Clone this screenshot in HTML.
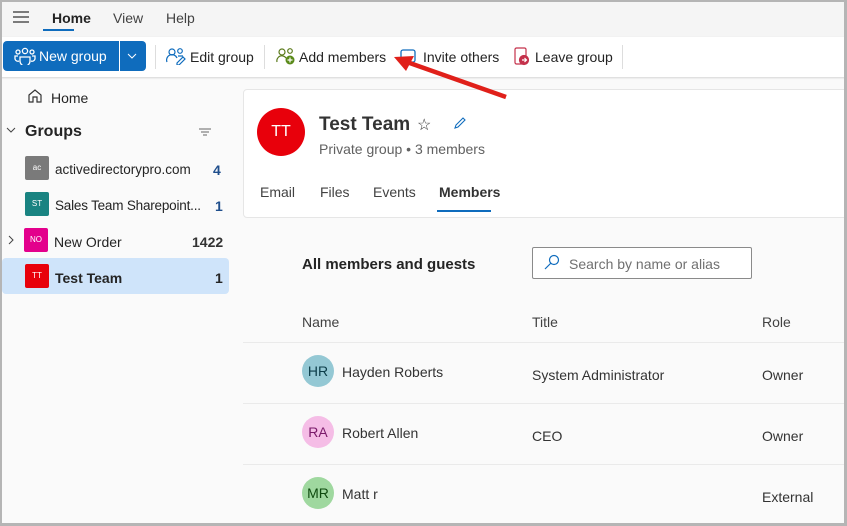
<!DOCTYPE html>
<html><head><meta charset="utf-8"><style>
*{box-sizing:border-box;margin:0;padding:0}
body{width:847px;height:526px;overflow:hidden;font-family:"Liberation Sans",sans-serif;background:#fafafa;color:#242424;position:relative;font-size:14px}
.frame{position:absolute;inset:0;border:2px solid #b5b5b5;border-right:3px solid #b5b5b5;border-bottom:3px solid #b5b5b5;pointer-events:none;z-index:10}
.a{position:absolute;white-space:nowrap}
.top{position:absolute;left:0;top:0;width:847px;height:37px;background:#f5f5f5}
.tb{position:absolute;left:0;top:37px;width:847px;height:40px;background:#fff;box-shadow:0 1px 2px rgba(0,0,0,.15)}
.sq{position:absolute;width:24px;height:24px;border-radius:2px;color:#fff;font-size:8px;text-align:center;line-height:24px}
.av{position:absolute;width:32px;height:32px;border-radius:50%;font-size:14px;text-align:center;line-height:32px}
.sep{position:absolute;top:45px;width:1px;height:24px;background:#ddd}
.hr{position:absolute;left:243px;width:604px;height:1px;background:#eaeaea}
</style></head><body>
<div class="top"></div>
<svg class="a" style="left:12px;top:10px" width="18" height="14"><path d="M1 2h16M1 7h16M1 12h16" stroke="#333" stroke-width="1.3"/></svg>
<div class="a" style="left:52px;top:10px;font-weight:bold;font-size:14px">Home</div>
<div class="a" style="left:43px;top:29px;width:31px;height:2px;background:#0f6cbd"></div>
<div class="a" style="left:113px;top:10px;color:#424242">View</div>
<div class="a" style="left:166px;top:10px;color:#424242">Help</div>
<div class="tb"></div>
<div class="a" style="left:3px;top:41px;width:116px;height:30px;background:#0f6cbd;border-radius:4px 0 0 4px"></div>
<div class="a" style="left:120px;top:41px;width:26px;height:30px;background:#0f6cbd;border-radius:0 4px 4px 0"></div>
<svg class="a" style="left:14px;top:47px" width="22" height="18" fill="none" stroke="#fff" stroke-width="1.3"><circle cx="11" cy="4" r="2.6"/><circle cx="4" cy="5" r="2"/><circle cx="18" cy="5" r="2"/><path d="M6 10h10v4a5 5 0 0 1-10 0z"/><path d="M4 9H1v3a3 3 0 0 0 4 2M18 9h3v3a3 3 0 0 1-4 2"/></svg>
<div class="a" style="left:39px;top:48px;color:#fff;font-size:14px">New group</div>
<svg class="a" style="left:127px;top:53px" width="10" height="7"><path d="M1 1l4 4 4-4" stroke="#fff" fill="none"/></svg>
<div class="sep" style="left:155px"></div>
<svg class="a" style="left:166px;top:47px" width="20" height="18" fill="none" stroke="#0f6cbd" stroke-width="1.2"><circle cx="6" cy="5" r="3"/><circle cx="14" cy="4" r="2.3"/><path d="M1 15a5 5 0 0 1 10-4M12 9h5"/><path d="M11 16l6-6 2 2-6 6h-2z"/></svg>
<div class="a" style="left:190px;top:49px">Edit group</div>
<div class="sep" style="left:264px"></div>
<svg class="a" style="left:276px;top:47px" width="20" height="18" fill="none" stroke="#5a7a1a" stroke-width="1.2"><circle cx="6" cy="5" r="3"/><circle cx="14" cy="4" r="2.3"/><path d="M1 15a5 5 0 0 1 9-4"/><circle cx="14" cy="13" r="4.5" fill="#5a8a1a" stroke="none"/><path d="M14 10.5v5M11.5 13h5" stroke="#fff"/></svg>
<div class="a" style="left:299px;top:49px">Add members</div>
<svg class="a" style="left:400px;top:48px" width="16" height="16" fill="none" stroke="#0f6cbd" stroke-width="1.3"><rect x="1" y="2" width="14" height="12" rx="2"/></svg>
<div class="a" style="left:423px;top:49px">Invite others</div>
<svg class="a" style="left:513px;top:47px" width="18" height="19" fill="none" stroke="#c4314b" stroke-width="1.2"><rect x="2" y="1" width="11" height="16" rx="1.5"/><circle cx="11" cy="13" r="4.5" fill="#c4314b"/><path d="M9 13h4M11.5 11l2 2-2 2" stroke="#fff"/></svg>
<div class="a" style="left:535px;top:49px">Leave group</div>
<div class="sep" style="left:622px"></div>
<svg class="a" style="left:390px;top:50px;z-index:5" width="120" height="50"><path d="M116 47L14 11" stroke="#e0201a" stroke-width="4.5"/><path d="M4 7l20-1-8 15z" fill="#e0201a"/></svg>

<svg class="a" style="left:27px;top:88px" width="16" height="16" fill="none" stroke="#333" stroke-width="1.2"><path d="M2 7l6-5 6 5v7h-4v-5H6v5H2z"/></svg>
<div class="a" style="left:51px;top:90px">Home</div>
<svg class="a" style="left:6px;top:127px" width="10" height="8"><path d="M1 1l4 4 4-4" stroke="#444" fill="none"/></svg>
<div class="a" style="left:25px;top:123px;font-weight:bold;font-size:16px">Groups</div>
<svg class="a" style="left:198px;top:128px" width="14" height="9"><path d="M1 1h12M3 4h8M5 7h4" stroke="#666"/></svg>
<div class="sq" style="left:25px;top:156px;background:#7a7a7a">ac</div>
<div class="a" style="left:55px;top:162px;font-size:13.5px">activedirectorypro.com</div>
<div class="a" style="left:213px;top:162px;color:#1f4e8c;font-weight:bold">4</div>
<div class="sq" style="left:25px;top:192px;background:#198381">ST</div>
<div class="a" style="left:55px;top:198px;font-size:13.5px;letter-spacing:-0.2px">Sales Team Sharepoint...</div>
<div class="a" style="left:215px;top:198px;font-weight:bold;color:#1f4e8c">1</div>
<svg class="a" style="left:8px;top:235px" width="7" height="10"><path d="M1 1l4 4-4 4" stroke="#444" fill="none"/></svg>
<div class="sq" style="left:24px;top:228px;background:#e3008c">NO</div>
<div class="a" style="left:54px;top:234px">New Order</div>
<div class="a" style="left:192px;top:234px;font-weight:bold;color:#333">1422</div>
<div class="a" style="left:2px;top:258px;width:227px;height:36px;background:#cfe4fa;border-radius:4px"></div>
<div class="sq" style="left:25px;top:264px;background:#e8000b">TT</div>
<div class="a" style="left:55px;top:270px;font-weight:bold">Test Team</div>
<div class="a" style="left:215px;top:270px;font-weight:bold">1</div>

<div class="a" style="left:243px;top:89px;width:610px;height:129px;background:#fff;border:1px solid #e6e6e6;border-radius:4px"></div>
<div class="a" style="left:257px;top:108px;width:48px;height:48px;border-radius:50%;background:#e8000b;color:#fff;text-align:center;line-height:48px;font-size:16px">TT</div>
<div class="a" style="left:319px;top:114px;font-size:19px;font-weight:bold;color:#333">Test Team</div>
<div class="a" style="left:417px;top:115px;font-size:16px;color:#333">☆</div>
<svg class="a" style="left:453px;top:116px" width="14" height="14" fill="none" stroke="#0f6cbd" stroke-width="1.1"><path d="M2 12l1-3 7-7 2 2-7 7z"/></svg>
<div class="a" style="left:319px;top:141px;color:#616161">Private group • 3 members</div>
<div class="a" style="left:260px;top:184px;color:#424242">Email</div>
<div class="a" style="left:320px;top:184px;color:#424242">Files</div>
<div class="a" style="left:373px;top:184px;color:#424242">Events</div>
<div class="a" style="left:439px;top:184px;font-weight:bold;color:#333">Members</div>
<div class="a" style="left:437px;top:210px;width:54px;height:2px;background:#0f6cbd"></div>

<div class="a" style="left:302px;top:256px;font-size:15px;font-weight:bold">All members and guests</div>
<div class="a" style="left:532px;top:247px;width:220px;height:32px;background:#fff;border:1px solid #8a8a8a;border-radius:2px"></div>
<svg class="a" style="left:544px;top:254px" width="16" height="16" fill="none" stroke="#0f6cbd" stroke-width="1.2"><circle cx="10" cy="6" r="4.5"/><path d="M7 9l-6 6"/></svg>
<div class="a" style="left:569px;top:256px;color:#707070">Search by name or alias</div>

<div class="a" style="left:302px;top:314px;color:#424242">Name</div>
<div class="a" style="left:532px;top:314px;color:#424242">Title</div>
<div class="a" style="left:762px;top:314px;color:#424242">Role</div>
<div class="hr" style="top:342px"></div>
<div class="av" style="left:302px;top:355px;background:#94c8d4;color:#0b3c48">HR</div>
<div class="a" style="left:342px;top:364px;color:#333">Hayden Roberts</div>
<div class="a" style="left:532px;top:367px;color:#333">System Administrator</div>
<div class="a" style="left:762px;top:367px;color:#333">Owner</div>
<div class="hr" style="top:403px"></div>
<div class="av" style="left:302px;top:416px;background:#f5bde6;color:#7a1a6a">RA</div>
<div class="a" style="left:342px;top:425px;color:#333">Robert Allen</div>
<div class="a" style="left:532px;top:428px;color:#333">CEO</div>
<div class="a" style="left:762px;top:428px;color:#333">Owner</div>
<div class="hr" style="top:464px"></div>
<div class="av" style="left:302px;top:477px;background:#9fd89f;color:#0e4a0e">MR</div>
<div class="a" style="left:342px;top:486px;color:#333">Matt r</div>
<div class="a" style="left:762px;top:489px;color:#333">External</div>
<div class="frame"></div>
</body></html>
